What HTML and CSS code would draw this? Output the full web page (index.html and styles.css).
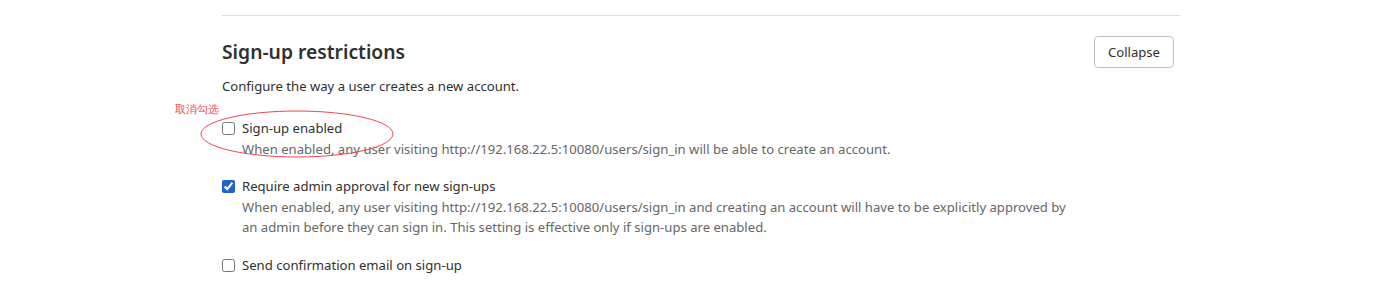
FILE: index.html
```html
<html>
    <head>
        <meta charset="utf-8" />
        <title>Sign-up restrictions</title>
        <link rel="stylesheet" href="styles.css">
    </head>
    <body>
        <div class="settings">
            <hr class="divider" />
            <div class="section-header">
                <h4>Sign-up restrictions</h4>
                <button type="button" class="btn">Collapse</button>
            </div>
            <p class="section-desc">Configure the way a user creates a new account.</p>

            <div class="form-check first">
                <span class="note">取消勾选</span>
                <svg class="note-ring" width="200" height="52" viewBox="0 0 200 52">
                    <ellipse cx="98" cy="25" rx="96" ry="23" fill="none" stroke="#f0474f" stroke-width="1" />
                </svg>
                <input type="checkbox" id="signup-enabled" />
                <label for="signup-enabled">Sign-up enabled</label>
                <div class="help">When enabled, any user visiting http://192.168.22.5:10080/users/sign_in will be able to create an account.</div>
            </div>

            <div class="form-check">
                <input type="checkbox" id="require-approval" checked="checked" />
                <label for="require-approval">Require admin approval for new sign-ups</label>
                <div class="help">When enabled, any user visiting http://192.168.22.5:10080/users/sign_in and creating an account will have to be explicitly approved by an admin before they can sign in. This setting is effective only if sign-ups are enabled.</div>
            </div>

            <div class="form-check last">
                <input type="checkbox" id="confirm-email" />
                <label for="confirm-email">Send confirmation email on sign-up</label>
            </div>
        </div>
    </body>
</html>
```

FILE: styles.css
```css
body{
    margin: 0;
    background-color: #fff;
    font-family: "Noto Sans", "Open Sans", sans-serif;
    font-size: 13.12px;
    color: #303030;
}

.settings{
    width: 958px;
    margin-left: 222px;
    padding-top: 15px;
}

.divider{
    margin: 0;
    border: 0;
    border-top: 1px solid #dcdcde;
}

.section-header{
    display: flex;
    justify-content: space-between;
    align-items: center;
    margin-top: 20px;
    margin-right: 6px;
    height: 32px;
}

.section-header h4{
    margin: 0;
    font-size: 19.3px;
    font-weight: 600;
    line-height: 24px;
}

.btn{
    height: 32px;
    padding: 0 13px;
    font-family: inherit;
    font-size: 13.12px;
    color: #303030;
    background-color: #fff;
    border: 1px solid #bfbfc3;
    border-radius: 4px;
}

.section-desc{
    margin: 8px 0 0;
    line-height: 20px;
}

.form-check{
    position: relative;
    margin-top: 17px;
    padding-left: 20px;
    line-height: 20px;
}

.form-check.first{
    margin-top: 22px;
}

.form-check.last{
    margin-top: 18px;
}

.form-check input{
    position: absolute;
    left: 0;
    top: 4px;
    width: 13px;
    height: 13px;
    margin: 0;
    accent-color: #1f62d0;
}

.help{
    max-width: 825px;
    margin-top: 1px;
    color: #666;
}

.note{
    position: absolute;
    left: -47px;
    top: -16px;
    font-size: 11px;
    line-height: 14px;
    color: #f0474f;
}

.note-ring{
    position: absolute;
    left: -23px;
    top: -9px;
    pointer-events: none;
}
```
